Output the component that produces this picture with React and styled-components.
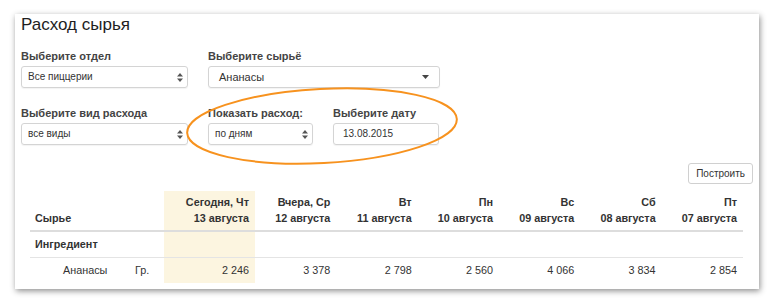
import React from 'react';
import styled, { createGlobalStyle } from 'styled-components';

const GlobalStyle = createGlobalStyle`
    body {
        margin: 0;
        background: #ffffff;
        font-family: "Liberation Sans", Arial, sans-serif;
        color: #333333;
    }
`

const days = [
    { top: 'Сегодня, Чт', bottom: '13 августа', value: '2 246', today: true },
    { top: 'Вчера, Ср', bottom: '12 августа', value: '3 378' },
    { top: 'Вт', bottom: '11 августа', value: '2 798' },
    { top: 'Пн', bottom: '10 августа', value: '2 560' },
    { top: 'Вс', bottom: '09 августа', value: '4 066' },
    { top: 'Сб', bottom: '08 августа', value: '3 834' },
    { top: 'Пт', bottom: '07 августа', value: '2 854' },
];

function UpDown()
{
    return (
        <svg width="6" height="9" viewBox="0 0 6 9">
            <path d="M3 0 L6 3.5 H0 Z M3 9 L0 5.5 H6 Z" fill="#555" />
        </svg>
    );
}

function Caret()
{
    return (
        <svg width="7" height="4" viewBox="0 0 7 4">
            <path d="M0 0 H7 L3.5 4 Z" fill="#444" />
        </svg>
    );
}

function App()
{
    return (
        <Page>
            <GlobalStyle />
            <Panel>
                <Title>Расход сырья</Title>
                <FormRow>
                    <Field $w={167}>
                        <Label>Выберите отдел</Label>
                        <Select>Все пиццерии<Arrow><UpDown /></Arrow></Select>
                    </Field>
                    <Field $w={232}>
                        <Label>Выберите сырьё</Label>
                        <Select $size={11} $pad={10}>Ананасы<Arrow $right={10}><Caret /></Arrow></Select>
                    </Field>
                </FormRow>
                <FormRow $top={17}>
                    <Field $w={167}>
                        <Label>Выберите вид расхода</Label>
                        <Select>все виды<Arrow><UpDown /></Arrow></Select>
                    </Field>
                    <Field $w={105}>
                        <Label>Показать расход:</Label>
                        <Select>по дням<Arrow><UpDown /></Arrow></Select>
                    </Field>
                    <Field $w={106}>
                        <Label>Выберите дату</Label>
                        <Select $pad={9}>13.08.2015</Select>
                    </Field>
                </FormRow>
                <ButtonRow>
                    <Button>Построить</Button>
                </ButtonRow>
                <Table>
                    <colgroup>
                        <col style={{ width: 100 }} />
                        <col style={{ width: 34 }} />
                        <col style={{ width: 91 }} />
                        {days.slice(1).map((d) => <col key={d.bottom} />)}
                    </colgroup>
                    <thead>
                        <tr>
                            <HeadCell $left>Сырье</HeadCell>
                            <HeadCell />
                            {days.map((d) => (
                                <HeadCell key={d.bottom} $today={d.today}>
                                    {d.top}<br />{d.bottom}
                                </HeadCell>
                            ))}
                        </tr>
                    </thead>
                    <tbody>
                        <tr>
                            <GroupCell>Ингредиент</GroupCell>
                            <Cell />
                            {days.map((d) => <Cell key={d.bottom} $today={d.today} />)}
                        </tr>
                        <tr>
                            <Cell $left $indent>Ананасы</Cell>
                            <Cell $left>Гр.</Cell>
                            {days.map((d) => <Cell key={d.bottom} $today={d.today}>{d.value}</Cell>)}
                        </tr>
                    </tbody>
                </Table>
                <Highlight width="280" height="90" viewBox="0 0 280 90">
                    <ellipse cx="140" cy="45" rx="135" ry="37" fill="none" stroke="#f7921e" strokeWidth="2" transform="rotate(-3 140 45)" />
                </Highlight>
            </Panel>
        </Page>
    );
}

export default App;

const Page = styled.div`
    width: 780px;
    height: 304px;
    padding: 14px 0 0 15px;
    box-sizing: border-box;
    overflow: hidden;
`

const Panel = styled.div`
    position: relative;
    width: 744px;
    height: 275px;
    box-sizing: border-box;
    padding: 0 6px;
    background: #ffffff;
    box-shadow: 1px 2px 6px rgba(0, 0, 0, 0.45);
`

const Title = styled.h2`
    margin: 0;
    padding-top: 1px;
    font-size: 17px;
    line-height: 20px;
    font-weight: normal;
    color: #1e1e1e;
`

const FormRow = styled.div`
    display: flex;
    gap: 20px;
    margin-top: ${p => p.$top || 13}px;
`

const Field = styled.div`
    width: ${p => p.$w}px;
`

const Label = styled.div`
    font-size: 11px;
    font-weight: bold;
    line-height: 16px;
    margin-bottom: 2px;
    color: #444;
`

const Select = styled.div`
    position: relative;
    height: 22px;
    box-sizing: border-box;
    border: 1px solid #d4d4d4;
    border-radius: 3px;
    padding: 0 ${p => p.$pad || 6}px;
    font-size: ${p => p.$size || 10}px;
    line-height: 20px;
    color: #333;
    box-shadow: 0 1px 1px rgba(0, 0, 0, 0.05);
`

const Arrow = styled.span`
    position: absolute;
    right: ${p => p.$right || 4}px;
    top: 0;
    bottom: 0;
    display: flex;
    align-items: center;
`

const ButtonRow = styled.div`
    display: flex;
    justify-content: flex-end;
    margin-top: 18px;
`

const Button = styled.div`
    height: 21px;
    box-sizing: border-box;
    border: 1px solid #d0d0d0;
    border-radius: 3px;
    padding: 0 7px;
    font-size: 10px;
    line-height: 19px;
    color: #333;
`

const Table = styled.table`
    margin: 7px 0 0 9px;
    width: 713px;
    border-collapse: collapse;
    table-layout: fixed;
    font-size: 10.8px;
`

const HeadCell = styled.th`
    height: 40px;
    box-sizing: border-box;
    padding: 0 6px 4px 5px;
    vertical-align: bottom;
    text-align: ${p => p.$left ? 'left' : 'right'};
    line-height: 16px;
    font-weight: bold;
    color: #333;
    border-bottom: 2px solid #dddddd;
    background: ${p => p.$today ? '#fcf5e0' : 'transparent'};
`

const Cell = styled.td`
    height: 25px;
    padding: 0 6px;
    padding-left: ${p => p.$indent ? 33 : 5}px;
    text-align: ${p => p.$left ? 'left' : 'right'};
    line-height: 15px;
    border-top: 1px solid #e4e4e4;
    background: ${p => p.$today ? '#fcf5e0' : 'transparent'};
`

const GroupCell = styled(Cell)`
    font-weight: bold;
    text-align: left;
    border-top: none;
`

const Highlight = styled.svg`
    position: absolute;
    left: 167px;
    top: 67px;
    pointer-events: none;
`
